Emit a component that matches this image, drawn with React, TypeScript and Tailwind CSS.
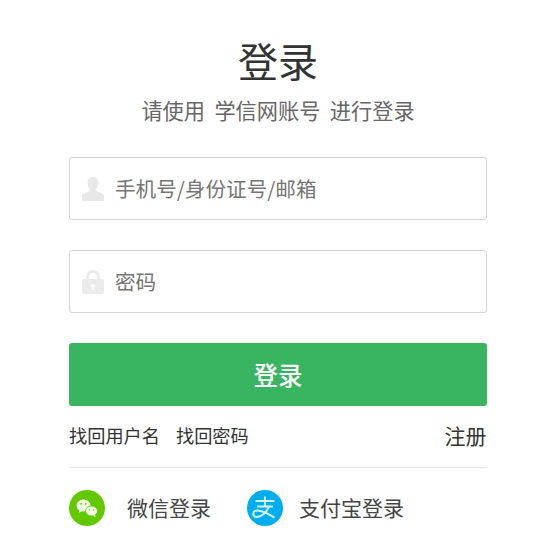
export default function App() {
  return (
    <div className="w-[558px] h-[555px] bg-white font-['Noto_Sans_CJK_SC','Noto_Sans',sans-serif] text-[#333]">
      <div className="w-[418px] ml-[69px] pt-[30px]">
        <h1 className="text-[40px] leading-[60px] text-center font-normal text-[#333]">登录</h1>
        <p className="mt-[5px] text-[21.200px] leading-[30px] text-center text-[#666] whitespace-pre">请使用  学信网账号  进行登录</p>
        <div className="mt-[32px] h-[63px] border border-[#d5d5d5] rounded-[3px] flex items-center pl-[12px]">
          <svg width="22" height="24" viewBox="0 0 22 24" className="shrink-0"><path fill="#e8e8e8" d="M11 0c3.500 0 5.500 2.400 5.500 5.800 0 2.600-1 4.800-2.400 6.200v1.200c0 .8.900 1.300 2.900 2 2.800 1 5 1.800 5 3.800v5H0v-5c0-2 2.200-2.800 5-3.800 2-.7 2.900-1.200 2.900-2V12C6.500 10.600 5.500 8.400 5.500 5.800 5.500 2.400 7.500 0 11 0z" /></svg>
          <span className="ml-[11px] text-[20.600px] text-[#757575]">手机号/身份证号/邮箱</span>
        </div>
        <div className="mt-[30px] h-[63px] border border-[#d5d5d5] rounded-[3px] flex items-center pl-[12px]">
          <svg width="22" height="24" viewBox="0 0 22 24" className="shrink-0"><path fill="#ebebeb" fillRule="evenodd" d="M11 0c4 0 7 2.900 7 7v2h1.500C20.900 9 22 10.100 22 11.500v10c0 1.400-1.100 2.500-2.500 2.500h-17C1.100 24 0 22.900 0 21.500v-10C0 10.100 1.100 9 2.500 9H4V7c0-4.100 3-7 7-7zm0 3C8.700 3 7 4.700 7 7v2h8V7c0-2.300-1.700-4-4-4zm0 11c-1 0-1.800.8-1.800 1.800 0 .7.300 1.200.8 1.500V20h2v-2.700c.5-.3.800-.8.800-1.500 0-1-.8-1.800-1.800-1.800z" /></svg>
          <span className="ml-[11px] text-[20.600px] text-[#757575]">密码</span>
        </div>
        <button className="mt-[30px] w-full h-[63px] pt-[2px] bg-[#39b562] rounded-[3px] text-white text-[24.500px] font-medium">登录</button>
        <div className="mt-[15px] flex items-center justify-between h-[30px]">
          <div className="flex gap-[16px] text-[18.200px] text-[#333]">
            <span>找回用户名</span>
            <span>找回密码</span>
          </div>
          <span className="text-[21px] text-[#333] -translate-x-[0.500px]">注册</span>
        </div>
        <div className="mt-[16px] border-t border-[#e8e8e8] pt-[22px] flex items-center">
          <div className="flex items-center">
            <svg width="36" height="36" viewBox="0 0 36 36" className="shrink-0">
              <circle cx="18" cy="18" r="18" fill="#62c900" />
              <ellipse cx="14.500" cy="15.500" rx="7" ry="6" fill="#f2fbe6" />
              <path d="M10.500 20l-1 3 3.500-1.800z" fill="#f2fbe6" />
              <ellipse cx="22.500" cy="21" rx="6" ry="5" fill="#f2fbe6" stroke="#62c900" strokeWidth=".8" />
              <path d="M26 25l.8 2-3-1.200z" fill="#f2fbe6" />
              <circle cx="12.200" cy="13.800" r=".9" fill="#62c900" />
              <circle cx="16.800" cy="13.800" r=".9" fill="#62c900" />
              <circle cx="20.500" cy="20" r=".7" fill="#62c900" />
              <circle cx="24.500" cy="20" r=".7" fill="#62c900" />
            </svg>
            <span className="ml-[22px] text-[21px] leading-[36px] -mt-[3px] text-[#444]">微信登录</span>
          </div>
          <div className="flex items-center ml-[36px]">
            <svg width="36" height="36" viewBox="0 0 36 36" className="shrink-0">
              <circle cx="18" cy="18" r="18" fill="#00aeef" />
              <path d="M8.500 11h19M18 6.500V16M10 16.500H26M22 16.500c-2.500 6-7.500 10.500-12 10.500-2.500 0-3.700-1.400-3.700-3 0-2.100 1.900-3.400 4.200-3.400 5 0 11 3.400 17 7" fill="none" stroke="#d5f1fc" strokeWidth="2" />
            </svg>
            <span className="ml-[16px] text-[21px] leading-[36px] -mt-[3px] text-[#444]">支付宝登录</span>
          </div>
        </div>
      </div>
    </div>
  );
}
